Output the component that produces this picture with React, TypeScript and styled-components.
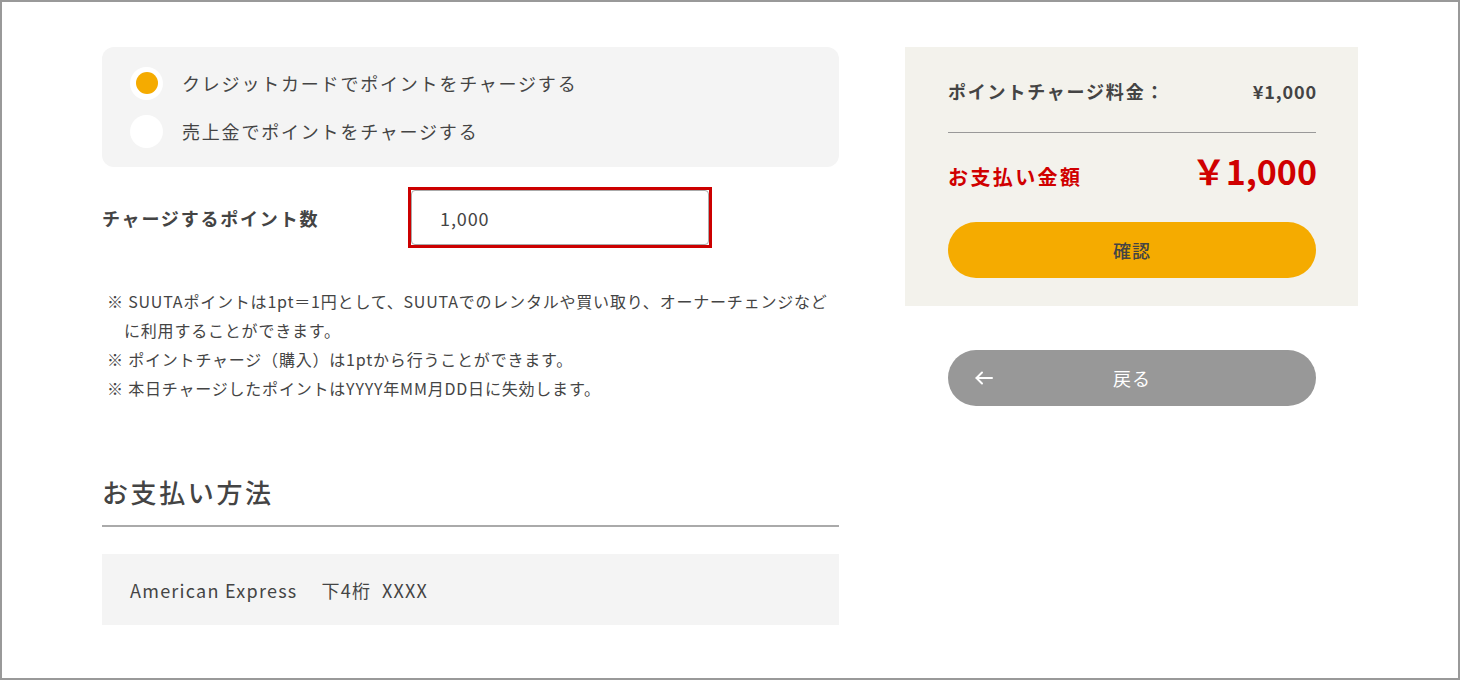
import styled, { createGlobalStyle } from "styled-components";

const GlobalStyle = createGlobalStyle`
  * { box-sizing: border-box; }
  body {
    margin: 0;
    font-family: "Noto Sans CJK JP", "Noto Sans", sans-serif;
    color: #444;
  }
`;

const Page = styled.div`
  width: 1460px;
  height: 680px;
  border: 2px solid #999;
  background: #fff;
  display: flex;
  gap: 66px;
  padding: 45px 0 0 100px;
`;

const Main = styled.div`
  width: 737px;
  display: flex;
  flex-direction: column;
`;

const Side = styled.div`
  width: 453px;
  display: flex;
  flex-direction: column;
`;

const RadioBox = styled.div`
  background: #f4f4f4;
  border-radius: 12px;
  padding: 12px 28px;
  display: flex;
  flex-direction: column;
`;

const RadioRow = styled.label`
  display: flex;
  align-items: center;
  gap: 19px;
  height: 48px;
  font-size: 18px;
  letter-spacing: 0.1em;
  color: #444;
`;

const RadioDot = styled.span<{ $checked?: boolean }>`
  width: 33px;
  height: 33px;
  border-radius: 50%;
  background: #fff;
  display: flex;
  align-items: center;
  justify-content: center;
  &::after {
    content: "";
    width: 22px;
    height: 22px;
    border-radius: 50%;
    background: ${(p) => (p.$checked ? "#f5ab00" : "transparent")};
  }
`;

const ChargeRow = styled.div`
  display: flex;
  align-items: center;
  margin-top: 20px;
`;

const ChargeLabel = styled.div`
  width: 306px;
  font-size: 18px;
  font-weight: 700;
  letter-spacing: 0.1em;
  color: #444;
`;

const ErrorFrame = styled.div`
  border: 3px solid #cc0000;
  width: 304px;
  height: 61px;
`;

const Input = styled.input`
  width: 100%;
  height: 100%;
  border: 1px solid #aaa;
  border-radius: 4px;
  padding: 0 28px;
  font-family: inherit;
  font-size: 18px;
  letter-spacing: 0.05em;
  color: #444;
  background: #fff;
  outline: none;
`;

const Notes = styled.ul`
  list-style: none;
  margin: 39px 0 0;
  padding: 0;
  font-size: 16px;
  line-height: 29px;
  letter-spacing: 0.05em;
  color: #444;
`;

const Note = styled.li`
  padding-left: 22px;
  text-indent: -17px;
`;

const SectionTitle = styled.h2`
  margin: 69px 0 0;
  font-size: 26px;
  font-weight: 500;
  line-height: 40px;
  letter-spacing: 0.1em;
  padding-bottom: 13px;
  border-bottom: 2px solid #aaa;
  color: #444;
`;

const CardBox = styled.div`
  margin-top: 27px;
  height: 71px;
  background: #f4f4f4;
  display: flex;
  align-items: center;
  padding: 0 28px;
  font-size: 18px;
  letter-spacing: 0.07em;
  color: #444;
  gap: 24px;
`;

const Summary = styled.div`
  background: #f3f2ec;
  padding: 30px 41px 28px 43px;
  display: flex;
  flex-direction: column;
`;

const SummaryRow = styled.div`
  display: flex;
  justify-content: space-between;
  align-items: center;
  height: 28px;
  font-size: 18px;
  font-weight: 700;
  color: #444;
`;

const Caption = styled.span`
  letter-spacing: 0.1em;
`;

const Price = styled.span`
  letter-spacing: 0.05em;
`;

const Divider = styled.hr`
  margin: 27px 1px 0 0;
  border: 0;
  border-top: 1px solid #999;
`;

const TotalRow = styled.div`
  display: flex;
  justify-content: space-between;
  align-items: baseline;
  margin-top: 13px;
  color: #d00000;
  font-weight: 700;
`;

const TotalLabel = styled.span`
  font-size: 20px;
  letter-spacing: 0.12em;
`;

const TotalAmount = styled.span`
  font-size: 34px;
  line-height: 50px;
`;

const PillButton = styled.button<{ $tone: "primary" | "back" }>`
  width: 368px;
  height: 56px;
  border: 0;
  border-radius: 28px;
  font-family: inherit;
  font-size: 18px;
  letter-spacing: 0.05em;
  font-weight: ${(p) => (p.$tone === "primary" ? 500 : 400)};
  background: ${(p) => (p.$tone === "primary" ? "#f5ab00" : "#989898")};
  color: ${(p) => (p.$tone === "primary" ? "#444" : "#fff")};
  display: grid;
  grid-template-columns: 1fr auto 1fr;
  align-items: center;
  padding: 0 27px;
  cursor: pointer;
`;

const Slot = styled.span`
  display: flex;
  justify-self: start;
`;

const PrimaryWrap = styled.div`
  margin-top: 26px;
`;

const BackWrap = styled.div`
  margin-top: 44px;
  padding-left: 43px;
`;

const BackArrow = () => (
  <svg width="18" height="14" viewBox="0 0 18 14" fill="none" stroke="#fff" strokeWidth="2" strokeLinecap="round" strokeLinejoin="round">
    <path d="M17 7H1.5" />
    <path d="M7 1.5L1.5 7L7 12.5" />
  </svg>
);

const notes = [
  "※ SUUTAポイントは1pt＝1円として、SUUTAでのレンタルや買い取り、オーナーチェンジなどに利用することができます。",
  "※ ポイントチャージ（購入）は1ptから行うことができます。",
  "※ 本日チャージしたポイントはYYYY年MM月DD日に失効します。",
];

export default function App() {
  return (
    <>
      <GlobalStyle />
      <Page>
        <Main>
          <RadioBox>
            <RadioRow>
              <RadioDot $checked />
              クレジットカードでポイントをチャージする
            </RadioRow>
            <RadioRow>
              <RadioDot />
              売上金でポイントをチャージする
            </RadioRow>
          </RadioBox>

          <ChargeRow>
            <ChargeLabel>チャージするポイント数</ChargeLabel>
            <ErrorFrame>
              <Input defaultValue="1,000" />
            </ErrorFrame>
          </ChargeRow>

          <Notes>
            {notes.map((n, i) => (
              <Note key={i}>{n}</Note>
            ))}
          </Notes>

          <SectionTitle>お支払い方法</SectionTitle>
          <CardBox>
            <span>American Express</span>
            <span>下4桁&nbsp;&nbsp;XXXX</span>
          </CardBox>
        </Main>

        <Side>
          <Summary>
            <SummaryRow>
              <Caption>ポイントチャージ料金：</Caption>
              <Price>¥1,000</Price>
            </SummaryRow>
            <Divider />
            <TotalRow>
              <TotalLabel>お支払い金額</TotalLabel>
              <TotalAmount>￥1,000</TotalAmount>
            </TotalRow>
            <PrimaryWrap>
              <PillButton $tone="primary">
                <Slot />
                確認
                <Slot />
              </PillButton>
            </PrimaryWrap>
          </Summary>
          <BackWrap>
            <PillButton $tone="back">
              <Slot>
                <BackArrow />
              </Slot>
              戻る
              <Slot />
            </PillButton>
          </BackWrap>
        </Side>
      </Page>
    </>
  );
}
